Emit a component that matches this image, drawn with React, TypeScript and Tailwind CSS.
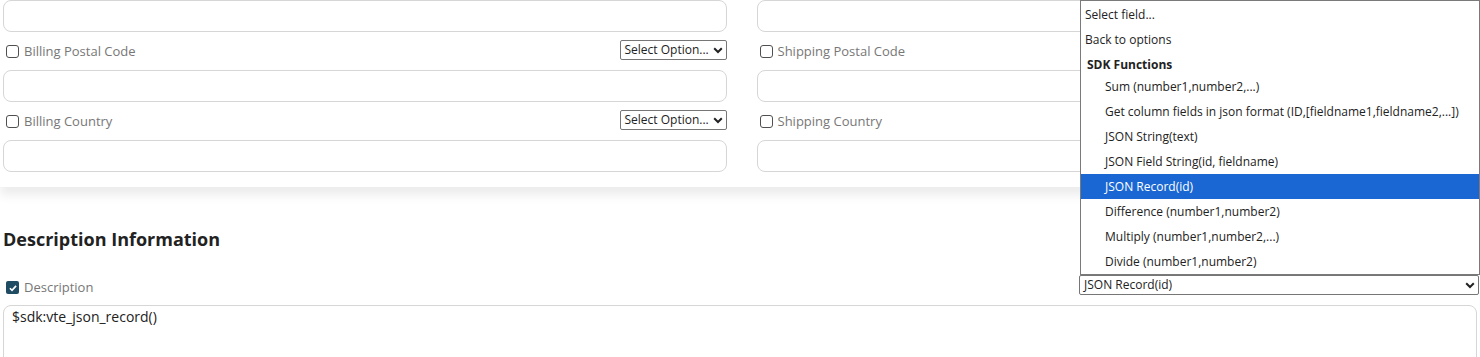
import clsx from "clsx";

const fieldItems = [
  "Sum (number1,number2,...)",
  "Get column fields in json format (ID,[fieldname1,fieldname2,...])",
  "JSON String(text)",
  "JSON Field String(id, fieldname)",
  "JSON Record(id)",
  "Difference (number1,number2)",
  "Multiply (number1,number2,...)",
  "Divide (number1,number2)",
];

function Chevron() {
  return (
    <svg viewBox="0 0 10 7" className="h-[7px] w-[10px] shrink-0">
      <path d="M1.2 1.3L5 5L8.8 1.3" stroke="#222" strokeWidth="2" fill="none" />
    </svg>
  );
}

function Checkbox({ checked }: { checked?: boolean }) {
  if (checked) {
    return (
      <span className="flex h-[13px] w-[13px] shrink-0 items-center justify-center rounded-[2px] bg-[#1f4b63]">
        <svg viewBox="0 0 12 12" className="h-[10px] w-[10px]">
          <path d="M2.3 6.3L4.8 8.7L9.7 3.4" stroke="white" strokeWidth="2" fill="none" />
        </svg>
      </span>
    );
  }
  return <span className="h-[13px] w-[13px] shrink-0 rounded-[3px] border border-[#505050] bg-white" />;
}

function MiniSelect({ value, className }: { value: string; className?: string }) {
  return (
    <div
      className={clsx(
        "flex h-5 items-center justify-between gap-1 overflow-hidden whitespace-nowrap rounded-[2px] border border-[#767676] bg-white pl-1 pr-[3px] text-[12px] text-[#222]",
        className
      )}
    >
      <span className="leading-none">{value}</span>
      <Chevron />
    </div>
  );
}

function Input() {
  return <div className="h-8 rounded-lg border border-[#d6d6d6] bg-white" />;
}

function LabelRow({ label, select }: { label: string; select?: boolean }) {
  return (
    <div className="mt-2 mb-[10px] flex h-5 items-center justify-between">
      <div className="flex items-center gap-[5px] pt-[3px] pl-[3px]">
        <Checkbox />
        <span className="text-[13px] text-[#777]">{label}</span>
      </div>
      {select && <MiniSelect value="Select Option..." className="w-[107px]" />}
    </div>
  );
}

export default function App() {
  return (
    <div className="relative h-[357px] w-[1480px] overflow-hidden bg-white font-['Open_Sans',sans-serif]">
      <div className="relative z-10 grid grid-cols-2 gap-x-[30px] bg-white pb-[15px] pl-[3px] shadow-[0_8px_10px_rgba(0,0,0,0.08)]">
        <div>
          <Input />
          <LabelRow label="Billing Postal Code" select />
          <Input />
          <LabelRow label="Billing Country" select />
          <Input />
        </div>
        <div>
          <Input />
          <LabelRow label="Shipping Postal Code" />
          <Input />
          <LabelRow label="Shipping Country" />
          <Input />
        </div>
      </div>

      <div className="pl-[3px] pr-[1px]">
        <h2 className="mt-[40px] text-[18px] leading-6 font-bold text-[#222]">Description Information</h2>
        <div className="mt-[24px] flex h-5 items-center justify-between">
          <div className="flex items-center gap-[5px] pt-[5px] pl-[3px]">
            <Checkbox checked />
            <span className="text-[13px] text-[#777]">Description</span>
          </div>
          <MiniSelect value="JSON Record(id)" className="w-[400px]" />
        </div>
        <div className="mt-[10px] mr-[2px] h-[70px] rounded-lg border border-[#d6d6d6] px-2 pt-[1px] text-[14px] leading-5 text-[#222]">
          $sdk:vte_json_record()
        </div>
      </div>

      <div className="absolute top-0 right-0 z-20 w-[400px] border border-[#7a7a7a] bg-white pt-[1px] text-[12px] text-[#222]">
        <div className="flex h-[25px] items-center pl-1">Select field...</div>
        <div className="flex h-[25px] items-center pl-1">Back to options</div>
        <div className="flex h-[22px] items-center pt-1 pl-[6px] font-bold">SDK Functions</div>
        {fieldItems.map((item) => (
          <div
            key={item}
            className={clsx(
              "flex h-[25px] items-center pl-6",
              item === "JSON Record(id)" && "bg-[#1a67d3] text-white"
            )}
          >
            {item}
          </div>
        ))}
      </div>
    </div>
  );
}
